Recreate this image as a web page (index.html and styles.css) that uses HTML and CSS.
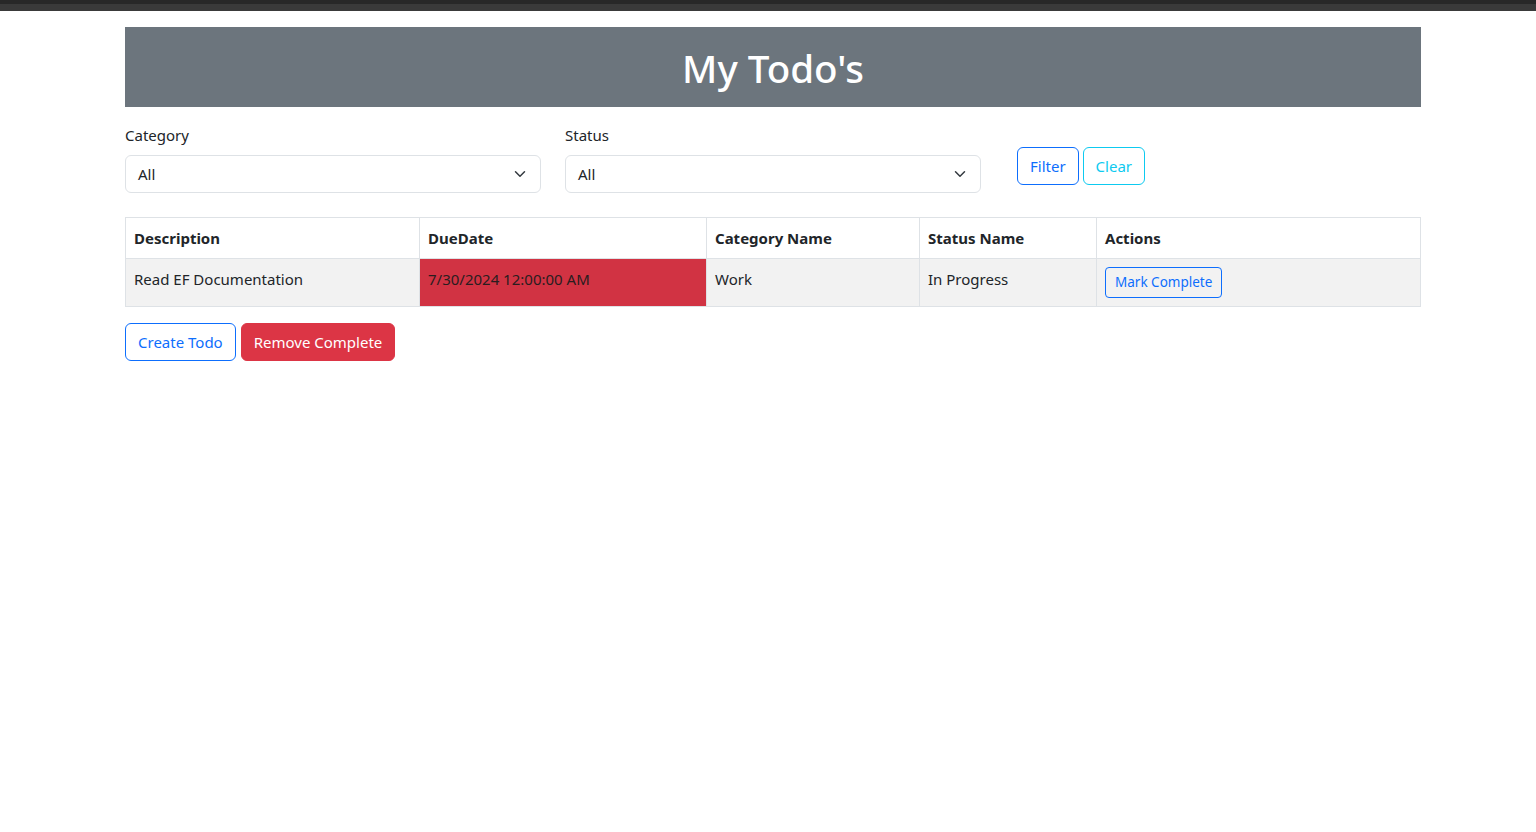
FILE: index.html
```html
<!DOCTYPE html>
<html lang="en">
<head>
<meta charset="utf-8">
<title>My Todo's</title>
<link rel="stylesheet" href="styles.css">
</head>
<body>
<div class="topbar"><div class="topbar-a"></div><div class="topbar-b"></div></div>
<main class="container">
  <header class="banner"><h1>My Todo's</h1></header>
  <form class="filters">
    <div class="field">
      <label>Category</label>
      <div class="select"><span>All</span>
        <svg width="16" height="16" viewBox="0 0 16 16"><path d="M2 5l6 6 6-6" fill="none" stroke="#343a40" stroke-width="2" stroke-linecap="round" stroke-linejoin="round"/></svg>
      </div>
    </div>
    <div class="field">
      <label>Status</label>
      <div class="select"><span>All</span>
        <svg width="16" height="16" viewBox="0 0 16 16"><path d="M2 5l6 6 6-6" fill="none" stroke="#343a40" stroke-width="2" stroke-linecap="round" stroke-linejoin="round"/></svg>
      </div>
    </div>
    <div class="field-actions">
      <button type="button" class="btn btn-outline-primary">Filter</button>
      <button type="button" class="btn btn-outline-info">Clear</button>
    </div>
  </form>
  <table class="todos">
    <thead>
      <tr>
        <th class="c1">Description</th>
        <th class="c2">DueDate</th>
        <th class="c3">Category Name</th>
        <th class="c4">Status Name</th>
        <th class="c5">Actions</th>
      </tr>
    </thead>
    <tbody>
      <tr>
        <td>Read EF Documentation</td>
        <td class="overdue">7/30/2024 12:00:00 AM</td>
        <td>Work</td>
        <td>In Progress</td>
        <td><button type="button" class="btn btn-sm btn-outline-primary">Mark Complete</button></td>
      </tr>
    </tbody>
  </table>
  <div class="bottom-actions">
    <button type="button" class="btn btn-outline-primary">Create Todo</button>
    <button type="button" class="btn btn-danger">Remove Complete</button>
  </div>
</main>
</body>
</html>
```

FILE: styles.css
```css
* { box-sizing: border-box; }
html, body { margin: 0; padding: 0; background: #fff; }
body {
  font-family: "Noto Sans", "Open Sans", sans-serif;
  font-size: 15px;
  line-height: 24px;
  color: #212529;
}
.topbar-a { height: 4px; background: #282828; }
.topbar-b { height: 7px; background: #3a3a3a; }

.container {
  width: 1296px;
  margin-left: 125px;
  padding-top: 16px;
}
.banner {
  background: #6c757d;
  height: 80px;
  display: flex;
  align-items: center;
  justify-content: center;
}
.banner h1 {
  margin: 0;
  color: #fff;
  font-size: 38.5px;
  font-weight: 500;
  line-height: 1.2;
  padding-top: 3px;
}
.filters {
  display: flex;
  gap: 24px;
  margin-top: 16px;
}
.field { width: 416px; }
.field label {
  display: block;
  margin-bottom: 8px;
  font-size: 15px;
  line-height: 24px;
  padding-top: 1px;
  margin-top: -1px;
}
.select {
  height: 38px;
  border: 1px solid #dee2e6;
  border-radius: 6px;
  display: flex;
  align-items: center;
  justify-content: space-between;
  padding: 0 12px 0 12px;
}
.select svg { width: 16px; height: 12px; }
.field-actions {
  padding-top: 24px;
  padding-left: 12px;
  display: flex;
  gap: 4px;
  align-items: flex-start;
}
.btn {
  font-family: inherit;
  font-size: 15px;
  line-height: 24px;
  padding: 6px 12px;
  border-radius: 6px;
  border: 1px solid transparent;
  background: transparent;
  cursor: pointer;
}
.btn-outline-primary { color: #0d6efd; border-color: #0d6efd; }
.btn-outline-info { color: #0dcaf0; border-color: #0dcaf0; }
.btn-danger { color: #fff; background: #dc3545; border-color: #dc3545; }
.btn-sm { font-size: 13.5px; line-height: 21px; padding: 4px 9px; border-radius: 4px; }

.todos {
  width: 1296px;
  margin-top: 24px;
  border-collapse: collapse;
}
.todos th, .todos td {
  border: 1px solid #dee2e6;
  padding: 8px 8px;
  text-align: left;
  vertical-align: top;
}
.todos th { font-weight: 700; height: 41px; }
.todos tbody tr td { background: #f2f2f2; }
.todos td.overdue { background: #d13343; color: #2a1d1f; }
.c1 { width: 294px; }
.c2 { width: 287px; }
.c3 { width: 213px; }
.c4 { width: 177px; }
.bottom-actions {
  margin-top: 16px;
  display: flex;
  gap: 5px;
}
```
